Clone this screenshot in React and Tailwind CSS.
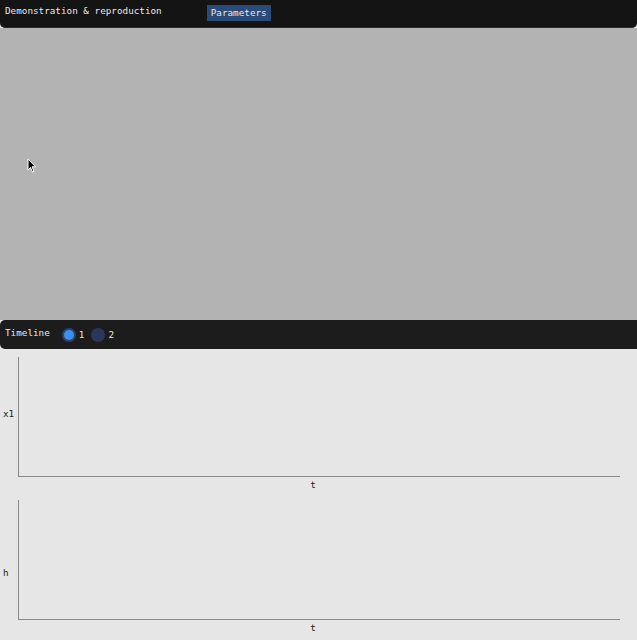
import React from 'react';

const mono = { fontFamily: '"DejaVu Sans Mono", "Liberation Mono", monospace' };

function Plot({ label, labelTop }) {
  return (
    <div className="relative h-[143px] pl-[18px] pr-[17px] pt-[8px]">
      <div className="h-[120px] border-l border-b border-[#8a8a8a]" />
      <span className="absolute left-[3px] text-[9.3px] text-[#222]" style={{ top: labelTop }}>{label}</span>
      <div className="text-center text-[9.3px] text-[#222] leading-none pt-[3px] pr-[12px]">t</div>
    </div>
  );
}

export default function App() {
  return (
    <div className="w-[637px] h-[640px] overflow-hidden bg-[#e6e6e6] flex flex-col" style={mono}>
      {/* Top menu bar */}
      <div className="h-[28px] bg-[#141414] rounded-b-[5px] flex items-start text-[9.3px] text-[#e8e8e8] shrink-0 border-b border-[#2a2a2a]">
        <span className="ml-[5px] mt-[4px]">Demonstration &amp; reproduction</span>
        <span className="ml-[45px] mt-[5px] px-[4px] h-[16px] leading-[16px] bg-[#2a4a78] text-[#e8e8e8]">Parameters</span>
      </div>

      {/* Viewport */}
      <div className="relative h-[292px] bg-[#b3b3b3] shrink-0">
        <svg className="absolute left-[27px] top-[130px]" width="10" height="15" viewBox="0 0 10 15">
          <path d="M1 1 L1 12 L3.5 9.5 L5.5 14 L7 13.3 L5 8.8 L8.5 8.8 Z" fill="#000" stroke="#fff" strokeWidth="1" />
        </svg>
      </div>

      {/* Timeline bar */}
      <div className="h-[29px] bg-[#1c1c1c] rounded-l-[5px] flex items-center text-[9.3px] text-[#e8e8e8] shrink-0">
        <span className="ml-[5px] -mt-[4px]">Timeline</span>
        <div className="ml-[12px] flex items-center gap-[3px]">
          <span className="w-[14px] h-[14px] rounded-full bg-[#29456b] flex items-center justify-center">
            <span className="w-[10px] h-[10px] rounded-full bg-[#3d8ef0]" />
          </span>
          <span>1</span>
        </div>
        <div className="ml-[7px] flex items-center gap-[3px]">
          <span className="w-[14px] h-[14px] rounded-full bg-[#29385a]" />
          <span>2</span>
        </div>
      </div>

      {/* Plots */}
      <div className="flex flex-col">
        <Plot label="x1" labelTop="58px" />
        <Plot label="h" labelTop="74px" />
      </div>
    </div>
  );
}
